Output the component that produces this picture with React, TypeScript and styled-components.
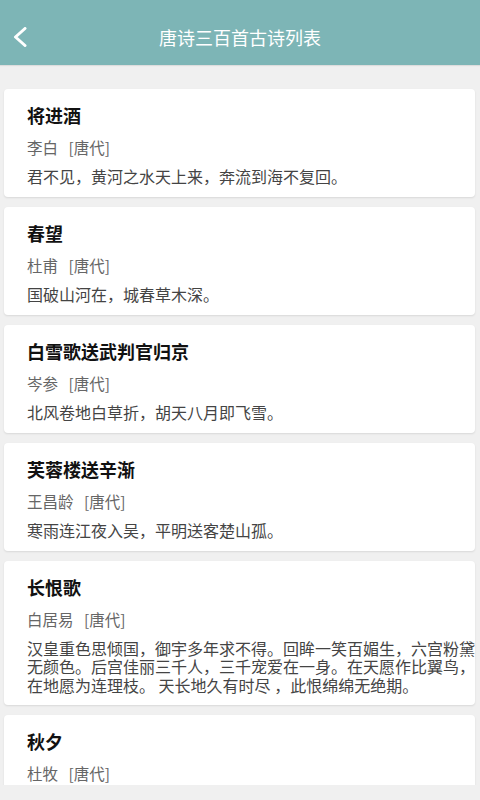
import React from 'react';
import styled, { createGlobalStyle } from 'styled-components';

const GlobalStyle = createGlobalStyle`
  html, body {
    margin: 0;
    padding: 0;
    background: #f0f0f0;
    font-family: "Noto Sans CJK SC", "Noto Sans", sans-serif;
  }
  * {
    box-sizing: border-box;
  }
`;

type Poem = {
  title: string;
  author: string;
  dynasty: string;
  lines: string[];
};

const poems: Poem[] = [
  { title: '将进酒', author: '李白', dynasty: '唐代', lines: ['君不见，黄河之水天上来，奔流到海不复回。'] },
  { title: '春望', author: '杜甫', dynasty: '唐代', lines: ['国破山河在，城春草木深。'] },
  { title: '白雪歌送武判官归京', author: '岑参', dynasty: '唐代', lines: ['北风卷地白草折，胡天八月即飞雪。'] },
  { title: '芙蓉楼送辛渐', author: '王昌龄', dynasty: '唐代', lines: ['寒雨连江夜入吴，平明送客楚山孤。'] },
  {
    title: '长恨歌',
    author: '白居易',
    dynasty: '唐代',
    lines: [
      '汉皇重色思倾国，御宇多年求不得。回眸一笑百媚生，六宫粉黛',
      '无颜色。后宫佳丽三千人，三千宠爱在一身。在天愿作比翼鸟，',
      '在地愿为连理枝。 天长地久有时尽 ，此恨绵绵无绝期。',
    ],
  },
  // only the head of this card is on screen; the list clips the rest
  { title: '秋夕', author: '杜牧', dynasty: '唐代', lines: [] },
];

const Page = styled.div`
  width: 480px;
  height: 800px;
  background: #f0f0f0;
  display: flex;
  flex-direction: column;
`;

const TopBar = styled.header`
  height: 65px;
  padding-top: 8px;
  background: #7db5b6;
  box-shadow: 0 1px 1px rgba(0, 0, 0, 0.08);
  display: grid;
  grid-template-columns: 56px 1fr 56px;
  align-items: center;
  flex-shrink: 0;
`;

const BackButton = styled.button`
  background: none;
  border: none;
  padding: 0 0 0 13px;
  height: 100%;
  display: flex;
  align-items: center;
  cursor: pointer;
`;

const TopTitle = styled.h1`
  margin: 0;
  text-align: center;
  color: #ffffff;
  font-size: 18px;
  font-weight: normal;
  line-height: 24px;
`;

const List = styled.div`
  height: 720px;
  overflow: hidden;
  padding: 24px 5px 0 4px;
  display: flex;
  flex-direction: column;
  gap: 10px;
`;

const Card = styled.div`
  background: #ffffff;
  border-radius: 4px;
  box-shadow: 0 1px 2px rgba(0, 0, 0, 0.1);
  min-height: 108px;
  padding: 14px 0 11px 23px;
  flex-shrink: 0;
`;

const PoemTitle = styled.div`
  font-size: 18px;
  font-weight: bold;
  color: #111111;
  line-height: 24px;
`;

const Author = styled.div`
  margin-top: 10px;
  font-size: 15.5px;
  line-height: 20px;
  color: #666666;
`;

const Dynasty = styled.span`
  margin-left: 10.5px;
`;

const Content = styled.div`
  margin-top: 10px;
  font-size: 16px;
  line-height: 18.3px;
  color: #444444;
  white-space: pre;
`;

const ChevronLeft = () => (
  <svg width="14" height="20" viewBox="0 0 14 20" fill="none">
    <polyline points="12,1.5 2.5,10 12,18.5" stroke="#ffffff" strokeWidth="3" strokeLinecap="round" strokeLinejoin="round" />
  </svg>
);

export default function App() {
  return (
    <>
      <GlobalStyle />
      <Page>
        <TopBar>
          <BackButton aria-label="返回">
            <ChevronLeft />
          </BackButton>
          <TopTitle>唐诗三百首古诗列表</TopTitle>
          <span />
        </TopBar>
        <List>
          {poems.map((p) => (
            <Card key={p.title}>
              <PoemTitle>{p.title}</PoemTitle>
              <Author>
                {p.author}
                <Dynasty>[{p.dynasty}]</Dynasty>
              </Author>
              {p.lines.length > 0 && <Content>{p.lines.join('\n')}</Content>}
            </Card>
          ))}
        </List>
      </Page>
    </>
  );
}
